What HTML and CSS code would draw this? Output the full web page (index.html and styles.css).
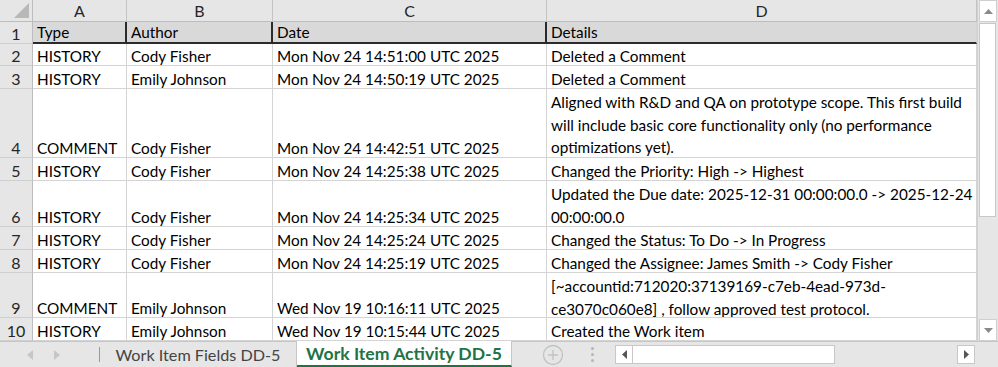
FILE: index.html
```html
<!DOCTYPE html>
<html>
<head>
<meta charset="utf-8">
<link rel="stylesheet" href="styles.css">
</head>
<body>
<div class="app">
  <div class="main">
    <div class="sheet">
      <div class="corner"><span class="tri"></span></div>
      <div class="colhead">A</div>
      <div class="colhead">B</div>
      <div class="colhead">C</div>
      <div class="colhead">D</div>

      <div class="rownum r1">1</div>
      <div class="cell hdr">Type</div>
      <div class="cell hdr">Author</div>
      <div class="cell hdr">Date</div>
      <div class="cell hdr last">Details</div>

      <div class="rownum">2</div>
      <div class="cell">HISTORY</div>
      <div class="cell">Cody Fisher</div>
      <div class="cell">Mon Nov 24 14:51:00 UTC 2025</div>
      <div class="cell">Deleted a Comment</div>

      <div class="rownum">3</div>
      <div class="cell">HISTORY</div>
      <div class="cell">Emily Johnson</div>
      <div class="cell">Mon Nov 24 14:50:19 UTC 2025</div>
      <div class="cell">Deleted a Comment</div>

      <div class="rownum">4</div>
      <div class="cell">COMMENT</div>
      <div class="cell">Cody Fisher</div>
      <div class="cell">Mon Nov 24 14:42:51 UTC 2025</div>
      <div class="cell wrap">Aligned with R&amp;D and QA on prototype scope. This first build will include basic core functionality only (no performance optimizations yet).</div>

      <div class="rownum">5</div>
      <div class="cell">HISTORY</div>
      <div class="cell">Cody Fisher</div>
      <div class="cell">Mon Nov 24 14:25:38 UTC 2025</div>
      <div class="cell">Changed the Priority: High -&gt; Highest</div>

      <div class="rownum">6</div>
      <div class="cell">HISTORY</div>
      <div class="cell">Cody Fisher</div>
      <div class="cell">Mon Nov 24 14:25:34 UTC 2025</div>
      <div class="cell wrap">Updated the Due date: 2025-12-31 00:00:00.0 -&gt; 2025-12-24 00:00:00.0</div>

      <div class="rownum">7</div>
      <div class="cell">HISTORY</div>
      <div class="cell">Cody Fisher</div>
      <div class="cell">Mon Nov 24 14:25:24 UTC 2025</div>
      <div class="cell">Changed the Status: To Do -&gt; In Progress</div>

      <div class="rownum">8</div>
      <div class="cell">HISTORY</div>
      <div class="cell">Cody Fisher</div>
      <div class="cell">Mon Nov 24 14:25:19 UTC 2025</div>
      <div class="cell">Changed the Assignee: James Smith -&gt; Cody Fisher</div>

      <div class="rownum">9</div>
      <div class="cell">COMMENT</div>
      <div class="cell">Emily Johnson</div>
      <div class="cell">Wed Nov 19 10:16:11 UTC 2025</div>
      <div class="cell wrap">[~accountid:712020:37139169-c7eb-4ead-973d-ce3070c060e8] , follow approved test protocol.</div>

      <div class="rownum">10</div>
      <div class="cell">HISTORY</div>
      <div class="cell">Emily Johnson</div>
      <div class="cell">Wed Nov 19 10:15:44 UTC 2025</div>
      <div class="cell">Created the Work item</div>
    </div>
    <div class="vscroll">
      <div class="sbtn"><svg width="9" height="5" viewBox="0 0 9 5"><path d="M0 5 L4.5 0 L9 5 Z" fill="#8a8a8a"/></svg></div>
      <div class="vthumb"></div>
      <div class="vtrack"></div>
      <div class="sbtn"><svg width="9" height="5" viewBox="0 0 9 5"><path d="M0 0 L4.5 5 L9 0 Z" fill="#8a8a8a"/></svg></div>
    </div>
  </div>
  <div class="tabbar">
    <div class="nav">
      <svg width="6" height="10" viewBox="0 0 6 10"><path d="M6 0 L0 5 L6 10 Z" fill="#c6c6c6"/></svg>
      <svg width="6" height="10" viewBox="0 0 6 10"><path d="M0 0 L6 5 L0 10 Z" fill="#c6c6c6"/></svg>
    </div>
    <div class="tab">Work Item Fields DD-5</div>
    <div class="tab active">Work Item Activity DD-5</div>
    <div class="tabgap">
      <svg width="22" height="22" viewBox="0 0 22 22"><circle cx="11" cy="11" r="9.5" fill="none" stroke="#c2c2c2" stroke-width="1.3"/><path d="M11 6 V16 M6 11 H16" stroke="#c2c2c2" stroke-width="1.4"/></svg>
      <span class="dots"><i></i><i></i><i></i></span>
    </div>
    <div class="hscroll">
      <div class="hbtn"><svg width="5" height="9" viewBox="0 0 5 9"><path d="M5 0 L0 4.5 L5 9 Z" fill="#555"/></svg></div>
      <div class="hthumb"></div>
      <div class="htrack"></div>
      <div class="hbtn"><svg width="5" height="9" viewBox="0 0 5 9"><path d="M0 0 L5 4.5 L0 9 Z" fill="#555"/></svg></div>
    </div>
  </div>
</div>
</body>
</html>
```

FILE: styles.css
```css
* { box-sizing: border-box; }
html, body { margin: 0; padding: 0; background: #fff; }
body { width: 998px; height: 367px; overflow: hidden; font-family: Lato, "Liberation Sans", sans-serif; font-size: 15.3px; color: #000; }

.app { display: flex; flex-direction: column; width: 998px; height: 367px; }
.main { display: flex; height: 341px; }

.sheet {
  display: grid;
  grid-template-columns: 33px 94px 146px 274px 430px;
  grid-template-rows: 22px 22px 22px 23px 69px 23px 46px 23px 23px 45px 23px;
  width: 977px;
}

.corner { background: #e6e6e6; border-right: 1px solid #bdbdbd; border-bottom: 1px solid #bdbdbd; position: relative; }
.tri { position: absolute; right: 3px; bottom: 3px; width: 0; height: 0; border-left: 15px solid transparent; border-bottom: 15px solid #b8b8b8; }

.colhead {
  background: #e6e6e6; border-right: 1px solid #c4c4c4; border-bottom: 1px solid #bdbdbd;
  display: flex; align-items: center; justify-content: center; color: #262626; font-size: 16px;
}
.rownum {
  background: #e6e6e6; border-right: 1px solid #bdbdbd; border-bottom: 1px solid #cfcfcf;
  display: flex; align-items: flex-end; justify-content: center; color: #262626; line-height: 19px; font-size: 16px;
}

.cell {
  border-right: 1px solid #d4d4d4; border-bottom: 1px solid #d4d4d4;
  padding: 0 2px 0 4px; line-height: 18.5px; white-space: nowrap; overflow: hidden;
  display: flex; align-items: flex-end;
}
.cell.wrap { white-space: normal; line-height: 22.7px; display: block; padding-right: 0; padding-top: 2px; }
.cell.hdr { background: #d9d9d9; border-right: 2px solid #2b2b2b; border-bottom: 2px solid #2b2b2b; line-height: 19px; }
.cell.hdr.last { border-right: 1px solid #d4d4d4; }

.vscroll { width: 21px; display: flex; flex-direction: column; background: #e6e6e6; border-left: 1px solid #d0d0d0; }
.sbtn { height: 22px; display: flex; align-items: center; justify-content: center; background: #fff; border: 1px solid #cfcfcf; margin: 0 1px; }
.vthumb { height: 194px; background: #fff; border: 1px solid #c8c8c8; margin: 1px 2px 0 1px; }
.vtrack { flex: 1; }

.tabbar { height: 26px; display: flex; background: #e6e6e6; border-top: 1px solid #c6c6c6; }
.nav { width: 100px; display: flex; align-items: center; gap: 21px; padding-left: 27px; border-right: 1px solid #9a9a9a; margin: 5px 0; }
.tab { width: 197px; display: flex; align-items: center; justify-content: center; color: #444; font-size: 16.2px; border-right: 1px solid #c6c6c6; height: 25px; }
.tab.active { width: 215px; background: #fff; color: #217346; font-weight: bold; font-size: 17.6px; border-bottom: 2px solid #217346; margin-top: -1px; height: 26px; }
.tabgap { width: 103px; display: flex; align-items: center; padding-left: 30px; gap: 27px; }
.dots { display: flex; flex-direction: column; gap: 3px; }
.dots i { display: block; width: 3px; height: 3px; background: #b5b5b5; border-radius: 50%; }
.hscroll { flex: 1; display: flex; align-items: center; padding-right: 23px; height: 25px; }
.hbtn { width: 18px; height: 19px; background: #fff; border: 1px solid #c8c8c8; display: flex; align-items: center; justify-content: center; }
.hthumb { width: 202px; height: 19px; background: #fff; border: 1px solid #c8c8c8; border-left: none; }
.htrack { flex: 1; height: 19px; }
```
